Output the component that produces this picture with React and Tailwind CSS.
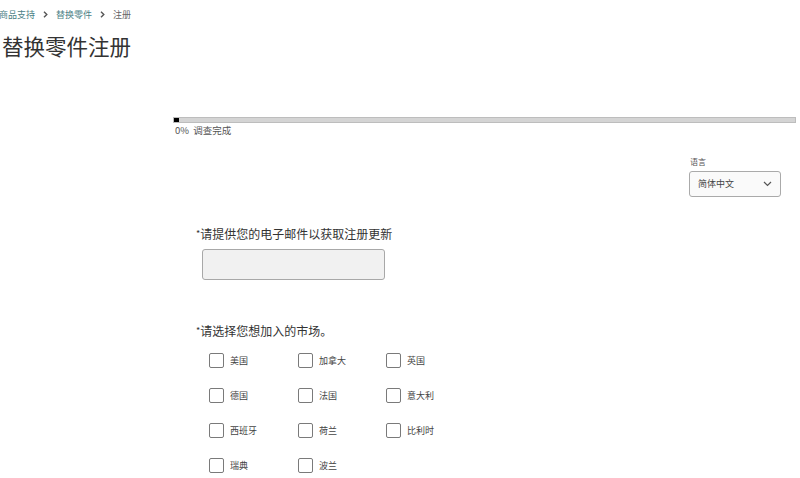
import React from "react";

const Check = ({ label }) => (
  <label className="flex items-center h-[17px]">
    <span className="w-[15px] h-[15px] border border-[#7a7a7a] rounded-[2px] bg-white shrink-0" />
    <span className="ml-[6px] text-[9px] text-[#444]">{label}</span>
  </label>
);

const Chev = () => (
  <svg className="mx-[8px]" width="5" height="7" viewBox="0 0 5 7" fill="none">
    <path d="M1 0.8L3.8 3.5L1 6.2" stroke="#555" strokeWidth="1.4" />
  </svg>
);

export default function App() {
  const markets = [
    "美国", "加拿大", "英国",
    "德国", "法国", "意大利",
    "西班牙", "荷兰", "比利时",
    "瑞典", "波兰",
  ];
  return (
    <div
      className="w-[800px] h-[478px] overflow-hidden bg-white text-[#333]"
      style={{ fontFamily: '"Noto Sans CJK SC", "Noto Sans", sans-serif' }}
    >
      <div className="flex items-center h-[12px] mt-[8px] ml-[-1px] text-[9px] leading-none">
        <span className="text-[#4b7f86]">商品支持</span>
        <Chev />
        <span className="text-[#4b7f86]">替换零件</span>
        <Chev />
        <span className="text-[#666]">注册</span>
      </div>
      <h1 className="mt-[13px] ml-[2px] text-[21.5px] leading-[26px] text-[#333] font-normal">
        替换零件注册
      </h1>

      <div className="ml-[173px] mr-[4px] mt-[58px]">
        <div className="h-[6px] bg-[#d4d4d4] border border-[#bdbdbd] flex">
          <div className="w-[5px] h-full bg-black" />
        </div>
        <div className="mt-[1px] ml-[2px] text-[9.5px] leading-[12px] text-[#555]">
          0%&nbsp;&nbsp;调查完成
        </div>
      </div>

      <div className="flex justify-end mr-[19px] mt-[21px]">
        <div className="w-[92px]">
          <div className="text-[8px] leading-[10px] text-[#555] ml-[1px]">语言</div>
          <div className="mt-[4px] h-[26px] border border-[#aaa] rounded-[3px] bg-[#fafafa] flex items-center justify-between px-[8px]">
            <span className="text-[9px] text-[#444]">简体中文</span>
            <svg width="9" height="6" viewBox="0 0 9 6" fill="none">
              <path d="M1 1l3.5 3.5L8 1" stroke="#555" strokeWidth="1.2" />
            </svg>
          </div>
        </div>
      </div>

      <div className="ml-[196px] mt-[29px]">
        <div className="text-[12px] leading-[16px] text-[#333]">
          <span className="text-[9px] align-top">*</span>请提供您的电子邮件以获取注册更新
        </div>
        <div className="ml-[6px] mt-[7px] w-[183px] h-[31px] bg-[#f1f1f1] border border-[#a8a8a8] rounded-[3px]" />

        <div className="mt-[43px] text-[12px] leading-[16px] text-[#333]">
          <span className="text-[9px] align-top">*</span>请选择您想加入的市场。
        </div>
        <div className="ml-[13px] mt-[13px] grid grid-cols-[89px_88px_100px] gap-y-[18px]">
          {markets.map((m) => (
            <Check key={m} label={m} />
          ))}
        </div>
      </div>
    </div>
  );
}
